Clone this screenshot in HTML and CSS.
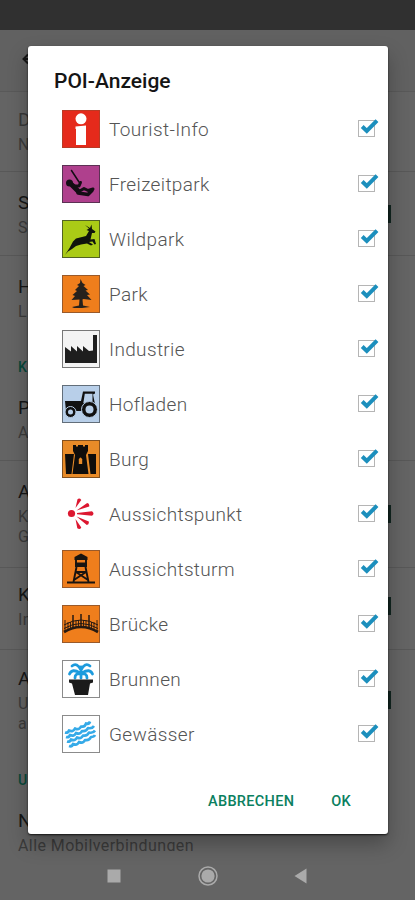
FILE: index.html
```html
<!DOCTYPE html>
<html lang="de">
<head>
<meta charset="utf-8">
<title>POI-Anzeige</title>
<link rel="stylesheet" href="styles.css">
</head>
<body>
<div class="screen">
  <div class="status"></div>
  <header class="appbar"><svg width="20" height="16" viewBox="0 0 20 16"><path d="M7 3.500 2.500 8 7 12.500M2 8h16" fill="none" stroke="#171717" stroke-width="2"/></svg></header>
  <main class="settings">
    <section class="pref first dim"><b>D</b><p>N</p></section>
    <section class="pref second"><b>S</b><p>S</p><i class="switch"></i></section>
    <section class="pref third"><b>H</b><p>L</p></section>
    <h2 class="group">K</h2>
    <section class="pref fourth"><b>P</b><p>A</p></section>
    <section class="pref fifth"><b>A</b><p>K</p><p>G</p><i class="switch"></i></section>
    <section class="pref sixth"><b>K</b><p>In</p><i class="switch"></i></section>
    <section class="pref seventh"><b>A</b><p>U</p><p>a</p><i class="switch"></i></section>
    <h2 class="group last-group">U</h2>
    <section class="pref eighth"><b>N</b><p>Alle Mobilverbindungen</p></section>
  </main>
  <nav class="navbar">
    <svg width="14" height="14"><rect x=".5" y=".5" width="13" height="13" fill="#aaa"/></svg>
    <svg width="20" height="20"><circle cx="10" cy="10" r="9" fill="none" stroke="#aaa" stroke-width="1.5"/><circle cx="10" cy="10" r="6.6" fill="#aaa"/></svg>
    <svg width="13" height="16"><path d="M12.5 .5v15L.5 8z" fill="#aaa"/></svg>
  </nav>
</div>

<svg class="defs" width="0" height="0"><defs>
  <symbol id="check" viewBox="0 0 22 22"><rect x="1.500" y="4.500" width="16" height="16" fill="#fff" stroke="#b5b5b5"/><path d="M5.200 10.500 9.800 15 20 4.700" fill="none" stroke="#1c8fbd" stroke-width="4"/></symbol>
</defs></svg>

<div class="dialog" role="dialog">
  <h1>POI-Anzeige</h1>
  <ul class="list">
    <li><svg class="icon" viewBox="0 0 38 38"><rect x=".5" y=".5" width="37" height="37" fill="#e52a1b" stroke="#b93a25"/><circle cx="19" cy="8.800" r="5.500" fill="#fff"/><path d="M13.500 16.500 24 15.500V35H14V19h-.5z" fill="#fff"/></svg><span>Tourist-Info</span><svg class="check"><use href="#check"/></svg></li>
    <li><svg class="icon" viewBox="0 0 38 38"><rect x=".5" y=".5" width="37" height="37" fill="#af408d" stroke="#5c3154"/><g fill="none" stroke="#130d14" stroke-linecap="round" stroke-linejoin="round"><path d="M9.500 5.500 17 17" stroke-width="1.500"/><path d="M10 20l6 6" stroke-width="5"/><path d="M11 21l6 0 1.500-3.500M16 27l6-3.500 4 2 5-1.500" stroke-width="3"/><path d="M16 28l10 1.500 4-4" stroke-width="3.500"/></g><circle cx="7.500" cy="18" r="3.500" fill="#130d14"/></svg><span>Freizeitpark</span><svg class="check"><use href="#check"/></svg></li>
    <li><svg class="icon" viewBox="0 0 38 38"><rect x=".5" y=".5" width="37" height="37" fill="#aacb16" stroke="#526323"/><path d="M3 35 7.500 28 11 21.500 14 18.500 24 16 27 11 24.500 10 27 8.500 23 5 28 8 29.500 4.500 30 9 33.500 11.500 32.500 13 30 13 28.500 19.500 32.500 19 34 24 32.500 24.500 30.500 21.500 27 22 31 24.500 29 25.500 25 23.500 19 24.500 14 26 10 29 6 31.500z" fill="#10140c"/></svg><span>Wildpark</span><svg class="check"><use href="#check"/></svg></li>
    <li><svg class="icon" viewBox="0 0 38 38"><rect x=".5" y=".5" width="37" height="37" fill="#ef7e1c" stroke="#9a5a2a"/><path d="m18.500 4 2 4 3 2-2 1 4.500 4-2.500.5 4.500 4-3 .5 4.500 5-8-1-1 .5.500 6 7 1.500-8 1h-8l-2-1 7-1.500.5-6-8 .5 3.500-4-2.500-1 4.500-4-2-1 4-4-2-1 3-2z" fill="#26211c"/></svg><span>Park</span><svg class="check"><use href="#check"/></svg></li>
    <li><svg class="icon" viewBox="0 0 38 38"><rect x=".5" y=".5" width="37" height="37" fill="#f3f3f3" stroke="#777"/><path d="M3 33V17l6 4.500V16l6 5.500V16l6 5.500V16l6 5 4-.5V5h4v28z" fill="#1e1e1e"/></svg><span>Industrie</span><svg class="check"><use href="#check"/></svg></li>
    <li><svg class="icon" viewBox="0 0 38 38"><rect x=".5" y=".5" width="37" height="37" fill="#b8cfe9" stroke="#626e7a"/><path d="M3 16h16l2-9.500h12v2l-2 1 2 9.500v7H4z" fill="#111"/><path d="M22.800 8.700h7.700v8H26l-4.700 1.600z" fill="#b8cfe9"/><circle cx="8.500" cy="27" r="5.500" fill="#111" stroke="#b8cfe9"/><circle cx="8.500" cy="27" r="2.500" fill="#b8cfe9"/><circle cx="27.500" cy="24.500" r="8" fill="#111" stroke="#b8cfe9"/><circle cx="27.500" cy="24.500" r="4" fill="#b8cfe9"/></svg><span>Hofladen</span><svg class="check"><use href="#check"/></svg></li>
    <li><svg class="icon" viewBox="0 0 38 38"><rect x=".5" y=".5" width="37" height="37" fill="#e88b28" stroke="#83511f"/><path d="M11 5h3v1.500h2V5h5v1.500h2V5h3v6l-2 4 2.500 19h-16L13 15l-2-4zM3 14h9l-2.500 20H4zM26 14h8v20h-5.500z" fill="#0f0d0b"/><path d="M16.800 24v-4.500q1.700-4 3.400 0V24z" fill="#e88b28"/></svg><span>Burg</span><svg class="check"><use href="#check"/></svg></li>
    <li><svg class="icon" viewBox="0 0 38 38"><g fill="#dc1730"><circle cx="9.500" cy="18.500" r="3.600"/><path d="M13.500 13 15.500 4.200q2-1.600 3.800.8zM14.500 15.500 25.200 8q2.500.5 2 3.500zM15 18 30 16.200q3 2.300 0 4.600L15 19.300zM14.500 21.500 26.800 26.500q.5 3-2 3.500zM13.500 24 19.300 32.500q-1.500 2.600-4 .7z"/></g></svg><span>Aussichtspunkt</span><svg class="check"><use href="#check"/></svg></li>
    <li><svg class="icon" viewBox="0 0 38 38"><rect x=".5" y=".5" width="37" height="37" fill="#ef7e1c" stroke="#9a5a2a"/><path d="M12.500 7 19 3.500 25.500 7v3h-13z" fill="#191410"/><path d="M14 9v7h10V9M14.500 17l-3 15M23.500 17l3 15M14 22l12 8M24 22l-12 8M13 22h12" fill="none" stroke="#191410" stroke-width="1.900"/><path d="M13 12.500h12V17H13zM5 31.500h28v2H5z" fill="#191410"/></svg><span>Aussichtsturm</span><svg class="check"><use href="#check"/></svg></li>
    <li><svg class="icon" viewBox="0 0 38 38"><rect x=".5" y=".5" width="37" height="37" fill="#ef7e1c" stroke="#9a5a2a"/><g fill="none" stroke="#271a12"><path d="M2 27q17-10 34 0" stroke-width="2.700"/><path d="M2 20q17-10 34 0M2 23.500q17-10 34 0" stroke-width="1"/><path d="M11 10v14M19 9v14M27 10v14" stroke-width="1.500"/><path d="M3 15v12M6 17v9M8.500 17v7M14 15v8M16.500 15v7M21.500 15v7M24 15v8M29.500 17v7M32 17v9M35 15v12" stroke-width=".9"/></g></svg><span>Brücke</span><svg class="check"><use href="#check"/></svg></li>
    <li><svg class="icon" viewBox="0 0 38 38"><rect x=".5" y=".5" width="37" height="37" fill="#fff" stroke="#8b8b8b"/><g fill="none" stroke="#1d9bdd" stroke-width="2.800" stroke-linecap="round"><path d="M19 18V7M19 10Q15 2 10 6M19 10Q23 2 28 6M18 13Q10 8 7.500 14M20 13q8-5 10.500 1M18 14q-5-1-5 4M20 14q5-1 5 4"/></g><path d="M7 19.500h24v3l-3 1L26 35H13l-3-11.500-3-1z" fill="#1b1b1b"/></svg><span>Brunnen</span><svg class="check"><use href="#check"/></svg></li>
    <li><svg class="icon" viewBox="0 0 38 38"><rect x=".5" y=".5" width="37" height="37" fill="#fff" stroke="#8b8b8b"/><g fill="none" stroke="#35aae8" stroke-width="2.700" stroke-linejoin="round"><path d="M3 17.500q3 1 4-2 4 2 6-2 4 2 6-2 4 1 5-3 3 1 4-2"/><path d="M4 22q3 1 4-2 4 2 6-2 4 2 6-2 4 1 6-3 4 1 6-2"/><path d="M5 26.500q3 1 4-2 4 2 6-2 4 2 6-2 4 1 6-3 4 1 6-2"/><path d="M7 31q3 1 4-2 4 2 6-2 4 2 6-2 4 1 6-3 3 0 4-2"/></g></svg><span>Gewässer</span><svg class="check"><use href="#check"/></svg></li>
  </ul>
  <div class="actions"><button>ABBRECHEN</button><button>OK</button></div>
</div>
</body>
</html>
```

FILE: styles.css
```css
* { box-sizing: border-box; }
body { margin: 0; width: 415px; height: 900px; overflow: hidden; position: relative; font-family: Roboto, "Liberation Sans", sans-serif; background: #656565; }
h1, h2, p, ul { margin: 0; padding: 0; }
.screen { height: 900px; display: flex; flex-direction: column; background: #646464; }
.status { height: 30px; background: #303030; flex: none; }
.appbar { height: 62px; flex: none; padding: 21px 0 0 21px; border-bottom: 1px solid #595959; background: #616161; }
.appbar svg { display: block; }
.settings { height: 759px; flex: none; overflow: hidden; }
.pref { position: relative; padding: 17px 18px 0; border-bottom: 1px solid #585858; }
.pref b { display: block; font-weight: 400; font-size: 19px; line-height: 28px; color: #161616; }
.pref p { font-size: 16px; line-height: 20px; letter-spacing: .42px; color: #3b3b3b; padding-top: 1px; margin-bottom: -1px; }
.dim b { color: #383838; }
.first { height: 80px; padding-top: 14px; }
.second { height: 84px; }
.third { height: 95px; border: 0; }
.group { height: 32px; padding-left: 18px; font-size: 14px; line-height: 32px; font-weight: 500; color: #07483a; }
.fourth { height: 78px; padding-top: 11px; }
.fifth { height: 107px; }
.sixth { height: 82px; padding-top: 13px; }
.seventh { height: 113px; padding-top: 15px; border: 0; }
.last-group { height: 34px; line-height: 34px; }
.eighth { height: 60px; padding-top: 10px; border: 0; }
.switch { position: absolute; right: 24px; top: calc(50% - 9px); width: 36px; height: 18px; background: #10241f; }
.sixth .switch { top: 29px; }
.seventh .switch { top: 41px; }
.navbar { flex: 1; display: flex; align-items: center; padding: 1px 0 0 107px; }
.navbar svg { display: block; }
.navbar svg:nth-child(2) { margin-left: 77px; }
.navbar svg:nth-child(3) { margin-left: 76px; }
.defs { position: absolute; }
.dialog { position: absolute; left: 28px; top: 46px; width: 360px; height: 788px; background: #fff; border-radius: 3px; box-shadow: 0 1px 2px rgba(0,0,0,.75), 0 10px 20px rgba(0,0,0,.28); padding-top: 20px; }
.dialog h1 { font-size: 21px; line-height: 30px; font-weight: 500; letter-spacing: 0; color: #151515; padding-left: 26px; height: 40px; }
.list { list-style: none; padding: 0 9px 0 34px; margin-top: -5px; }
.list li { height: 55px; display: flex; align-items: center; }
.icon { width: 38px; height: 38px; flex: none; margin-right: 9px; }
.list span { flex: 1; font-size: 19px; line-height: 24px; font-weight: 300; letter-spacing: .35px; color: #555; padding-top: 2px; }
.check { width: 22px; height: 22px; flex: none; margin-top: -4px; }
.actions { display: flex; justify-content: flex-end; gap: 37px; padding: 28px 37px 0 0; }
.actions button { border: 0; padding: 0; background: none; font: 500 14.500px/26px Roboto, sans-serif; color: #0b8060; letter-spacing: .3px; }
```
